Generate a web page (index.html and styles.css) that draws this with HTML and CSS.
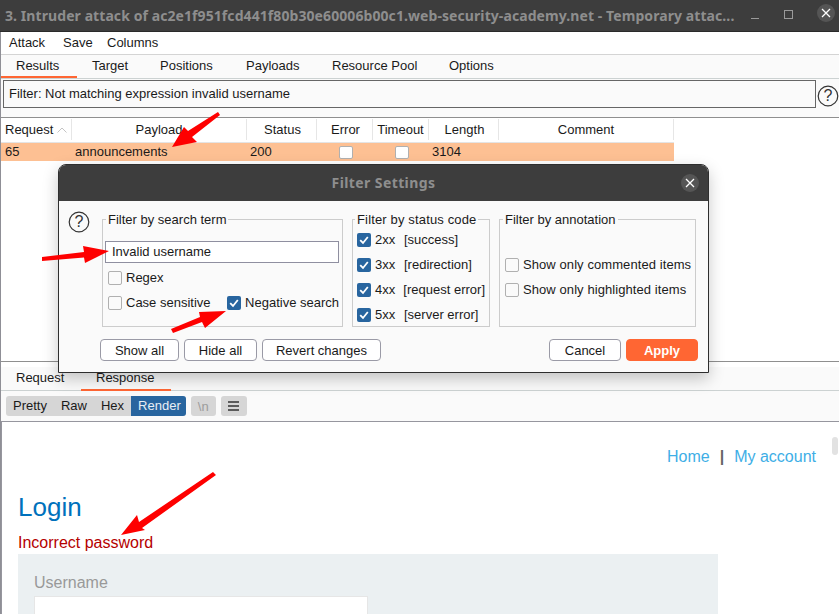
FILE: index.html
```html
<!DOCTYPE html>
<html lang="en">
<head>
    <meta charset="UTF-8">
    <meta name="viewport" content="width=device-width, initial-scale=1.0">
    <title>Intruder attack</title>
    <link rel="stylesheet" href="styles.css">
</head>
<body>

    <div class="window">
        <header class="titlebar">
            <span class="titlebar-text">3. Intruder attack of ac2e1f951fcd441f80b30e60006b00c1.web-security-academy.net - Temporary attac...</span>
            <span class="win-min"></span>
            <span class="win-max"></span>
            <span class="win-close">
                <svg width="10" height="10" viewBox="0 0 10 10"><path d="M1 1L9 9M9 1L1 9" stroke="#fff" stroke-width="1.3"/></svg>
            </span>
        </header>

        <nav class="menubar">
            <span>Attack</span>
            <span>Save</span>
            <span>Columns</span>
        </nav>

        <div class="tabs main-tabs">
            <span class="tab active">Results</span>
            <span class="tab">Target</span>
            <span class="tab">Positions</span>
            <span class="tab">Payloads</span>
            <span class="tab">Resource Pool</span>
            <span class="tab">Options</span>
        </div>

        <div class="filter-row">
            <div class="filter-box">Filter: Not matching expression invalid username</div>
            <svg class="help" width="22" height="22" viewBox="0 0 22 22"><circle cx="11" cy="11" r="9.8" fill="none" stroke="#333" stroke-width="1.2"/><text x="11" y="16" text-anchor="middle" class="help-mark">?</text></svg>
        </div>

        <div class="results">
            <div class="table-row table-head">
                <div class="cell col-request head-left">Request
                    <svg width="10" height="6" viewBox="0 0 10 6"><path d="M0.5 5.5L5 1L9.5 5.5" fill="none" stroke="#c4c4c4"/></svg>
                </div>
                <div class="cell col-payload">Payload</div>
                <div class="cell col-status">Status</div>
                <div class="cell col-error">Error</div>
                <div class="cell col-timeout">Timeout</div>
                <div class="cell col-length">Length</div>
                <div class="cell col-comment">Comment</div>
            </div>
            <div class="table-row table-hit">
                <div class="cell col-request">65</div>
                <div class="cell col-payload">announcements</div>
                <div class="cell col-status">200</div>
                <div class="cell col-error"><span class="check"></span></div>
                <div class="cell col-timeout"><span class="check"></span></div>
                <div class="cell col-length">3104</div>
                <div class="cell col-comment"></div>
            </div>
        </div>

        <div class="lower">
            <div class="tabs lower-tabs">
                <span class="tab">Request</span>
                <span class="tab active">Response</span>
            </div>
            <div class="toolbar">
                <div class="view-group">
                    <span class="view-btn">Pretty</span>
                    <span class="view-btn">Raw</span>
                    <span class="view-btn">Hex</span>
                    <span class="view-btn current">Render</span>
                </div>
                <span class="tool-btn muted">\n</span>
                <span class="tool-btn">
                    <svg width="11" height="10" viewBox="0 0 11 10"><path d="M0 1H11M0 5H11M0 9H11" stroke="#333" stroke-width="1.3"/></svg>
                </span>
            </div>
            <div class="render">
                <div class="site-nav">
                    <a>Home</a>
                    <span class="site-sep">|</span>
                    <a>My account</a>
                </div>
                <h1 class="login-title">Login</h1>
                <p class="login-error">Incorrect password</p>
                <div class="login-panel">
                    <label class="login-label">Username</label>
                    <div class="login-input"></div>
                </div>
                <div class="scroll-thumb"></div>
            </div>
        </div>
    </div>

    <section class="dialog">
        <header class="dialog-title">
            <span>Filter Settings</span>
            <span class="dialog-close">
                <svg width="10" height="10" viewBox="0 0 10 10"><path d="M1 1L9 9M9 1L1 9" stroke="#fff" stroke-width="1.3"/></svg>
            </span>
        </header>
        <div class="dialog-body">
            <svg class="dialog-help" width="22" height="22" viewBox="0 0 22 22"><circle cx="11" cy="11" r="9.8" fill="none" stroke="#333" stroke-width="1.2"/><text x="11" y="16" text-anchor="middle" class="help-mark">?</text></svg>

            <fieldset class="group group-term">
                <legend>Filter by search term</legend>
                <div class="term-input">Invalid username</div>
                <div class="opt opt-regex"><span class="check"></span>Regex</div>
                <div class="opt-line">
                    <div class="opt"><span class="check"></span>Case sensitive</div>
                    <div class="opt"><span class="check on"><svg width="14" height="14" viewBox="0 0 14 14"><path d="M3.2 7.2L6 10L10.8 4" fill="none" stroke="#fff" stroke-width="1.8"/></svg></span>Negative search</div>
                </div>
            </fieldset>

            <fieldset class="group group-status">
                <legend>Filter by status code</legend>
                <div class="opt"><span class="check on"><svg width="14" height="14" viewBox="0 0 14 14"><path d="M3.2 7.2L6 10L10.8 4" fill="none" stroke="#fff" stroke-width="1.8"/></svg></span><span class="code">2xx</span>[success]</div>
                <div class="opt"><span class="check on"><svg width="14" height="14" viewBox="0 0 14 14"><path d="M3.2 7.2L6 10L10.8 4" fill="none" stroke="#fff" stroke-width="1.8"/></svg></span><span class="code">3xx</span>[redirection]</div>
                <div class="opt"><span class="check on"><svg width="14" height="14" viewBox="0 0 14 14"><path d="M3.2 7.2L6 10L10.8 4" fill="none" stroke="#fff" stroke-width="1.8"/></svg></span><span class="code">4xx</span>[request error]</div>
                <div class="opt"><span class="check on"><svg width="14" height="14" viewBox="0 0 14 14"><path d="M3.2 7.2L6 10L10.8 4" fill="none" stroke="#fff" stroke-width="1.8"/></svg></span><span class="code">5xx</span>[server error]</div>
            </fieldset>

            <fieldset class="group group-note">
                <legend>Filter by annotation</legend>
                <div class="opt"><span class="check"></span>Show only commented items</div>
                <div class="opt"><span class="check"></span>Show only highlighted items</div>
            </fieldset>
        </div>
        <footer class="dialog-actions">
            <button class="btn btn-show">Show all</button>
            <button class="btn btn-hide">Hide all</button>
            <button class="btn btn-revert">Revert changes</button>
            <button class="btn btn-cancel">Cancel</button>
            <button class="btn btn-apply">Apply</button>
        </footer>
    </section>

    <!-- red annotation arrows drawn over the screenshot -->
    <svg class="arrows" width="839" height="614" viewBox="0 0 839 614">
        <path d="M220 115L218 112L188 131L184 127L172 147L197 142L192 137Z"/>
        <path d="M42 257L42 261L84 257.5L85 263L109 251L83 246L84 252Z"/>
        <path d="M171 329L173 333L202 322L205 328L226 311L199 312L200 317Z"/>
        <path d="M213 472L216 475L142 528L145 530L121 535L137 515L139 522Z"/>
    </svg>

</body>
</html>
```

FILE: styles.css
```css
/* Page */
html, body {
    margin: 0;
    height: 100%;
    overflow: hidden;
}

body {
    position: relative;
    width: 839px;
    height: 614px;
    font-family: "Liberation Sans", Arial, sans-serif;
    font-size: 13px;
    color: #1a1a1a;
    background: #fff;
}

.window {
    display: flex;
    flex-direction: column;
    height: 614px;
}

/* thin grey window edge */
.window::after {
    content: "";
    position: absolute;
    left: 0;
    top: 32px;
    bottom: 0;
    width: 1px;
    background: #8f8f96;
}

/* Title bar */
.titlebar {
    flex: none;
    display: flex;
    align-items: center;
    height: 31px;
    padding-left: 5px;
    background: #3d3d3d;
    border-bottom: 1px solid #2a2a2a;
}

.titlebar-text {
    width: 733px;
    white-space: nowrap;
    overflow: hidden;
    font-family: "Noto Sans", sans-serif;
    font-weight: 700;
    font-size: 14px;
    letter-spacing: 0.08px;
    color: #8e8e8e;
}

.win-min {
    width: 8px;
    height: 1px;
    margin: 5px 0 0 13px;
    background: #9a9a9a;
}

.win-max {
    width: 7px;
    height: 7px;
    margin: 0 0 2px 25px;
    border: 1px solid #9a9a9a;
}

.win-close {
    display: flex;
    align-items: center;
    justify-content: center;
    width: 18px;
    height: 18px;
    margin: 0 0 5px 24px;
    border-radius: 50%;
    background: #555;
}

/* Menu and tabs */
.menubar {
    flex: none;
    display: flex;
    height: 23px;
    padding-left: 9px;
    line-height: 21px;
    border-bottom: 1px solid #d4d4d4;
    box-sizing: border-box;
}

.menubar span:nth-child(1) { width: 54px; }
.menubar span:nth-child(2) { width: 44px; }

.tabs {
    flex: none;
    display: flex;
    background: #fafafa;
    border-bottom: 1px solid #ccd2d2;
}

.tab {
    box-sizing: border-box;
    padding-left: 15px;
    border-bottom: 2px solid transparent;
    margin-bottom: -1px;
}

.tab.active {
    border-bottom-color: #ff6633;
}

.main-tabs {
    height: 23px;
    padding-left: 1px;
    line-height: 21px;
}

.main-tabs .tab { height: 23px; }
.main-tabs .tab:nth-child(1) { width: 76px; }
.main-tabs .tab:nth-child(2) { width: 68px; }
.main-tabs .tab:nth-child(3) { width: 86px; }
.main-tabs .tab:nth-child(4) { width: 86px; }
.main-tabs .tab:nth-child(5) { width: 117px; }

/* Filter row */
.filter-row {
    flex: none;
    display: flex;
    align-items: center;
    height: 38px;
    padding-left: 3px;
    background: #fafafa;
}

.filter-box {
    flex: none;
    width: 806px;
    height: 26px;
    margin-top: -9px;
    padding-left: 5px;
    line-height: 26px;
    background: #fafafa;
    border: 1px solid #666;
}

.help {
    flex: none;
    margin: -5px 0 0 1px;
}

.help-mark {
    font-family: "Liberation Sans", sans-serif;
    font-size: 16px;
    fill: #333;
}

/* Results table */
.results {
    flex: 1;
    border-top: 1px solid #8f8f8f;
    margin-left: 1px;
}

.table-row {
    display: flex;
    width: 673px;
}

.table-head {
    height: 25px;
    border-bottom: 1px solid #e4e4e4;
    box-sizing: border-box;
}

.table-head .cell {
    justify-content: center;
    height: 21px;
    margin: 1px 0 2px;
    padding-left: 0;
    line-height: 21px;
    border-right: 1px solid #e6e6e6;
}

.table-head .head-left {
    justify-content: flex-start;
    gap: 4px;
    padding-left: 4px;
}

.table-head .col-status,
.table-head .col-error,
.table-head .col-length {
    padding-left: 2px;
}

.table-hit {
    height: 18px;
    line-height: 18px;
    background: #fdc093;
}

.cell {
    display: flex;
    align-items: center;
    box-sizing: border-box;
    padding-left: 3px;
    white-space: nowrap;
}

.col-request { width: 71px; }
.col-payload { width: 175px; }
.col-status { width: 70px; }
.col-error { width: 56px; }
.col-timeout { width: 56px; }
.col-length { width: 70px; }
.col-comment { width: 175px; }

.table-hit .col-request { padding-left: 4px; }

.table-hit .col-error .check,
.table-hit .col-timeout .check {
    width: 14px;
    height: 13px;
    margin: 1px 0 0 19px;
    background: #fff;
}

/* Lower panel */
.lower {
    flex: none;
    display: flex;
    flex-direction: column;
    height: 253px;
    border-top: 1px solid #8f8f8f;
    box-sizing: border-box;
}

.lower-tabs {
    height: 24px;
    margin-top: 5px;
    line-height: 22px;
    box-sizing: border-box;
    padding-left: 1px;
}

.lower-tabs .tab { height: 24px; }
.lower-tabs .tab:nth-child(1) { width: 80px; }
.lower-tabs .tab:nth-child(2) { width: 90px; }

.toolbar {
    flex: none;
    display: flex;
    align-items: center;
    gap: 5px;
    height: 31px;
    padding-left: 6px;
    background: #fafafa;
    border-bottom: 1px solid #96969e;
    box-sizing: border-box;
}

.view-group {
    display: flex;
    height: 20px;
    line-height: 20px;
    background: #d6d6d6;
    border-radius: 3px;
}

.view-btn {
    padding: 0 7px;
}

.view-btn.current {
    padding-right: 5px;
    color: #e8eef5;
    background: #28659f;
    border-radius: 0 3px 3px 0;
}

.tool-btn {
    display: flex;
    align-items: center;
    justify-content: center;
    width: 25px;
    height: 20px;
    background: #d6d6d6;
    border-radius: 3px;
}

.tool-btn:last-child { width: 26px; }

.muted {
    color: #9c9c9c;
}

/* Rendered response */
.render {
    position: relative;
    flex: 1;
    overflow: hidden;
    margin-left: 1px;
    padding-left: 16px;
    background: #fff;
    border-left: 1px solid #96969e;
}

.site-nav {
    display: flex;
    justify-content: flex-end;
    gap: 10px;
    margin: 26px 23px 0 0;
    font-size: 16px;
    line-height: 18px;
    color: #3eaee6;
}

.site-sep {
    font-weight: 700;
    color: #666;
}

.login-title {
    margin: 26px 0 0;
    font-size: 26px;
    font-weight: 400;
    line-height: 30px;
    color: #0071bc;
}

.login-error {
    margin: 12px 0 0;
    font-size: 16px;
    line-height: 18px;
    color: #b50000;
}

.login-panel {
    width: 668px;
    height: 80px;
    margin-top: 2px;
    padding: 20px 16px 0;
    background: #ebf0f2;
}

.login-label {
    display: block;
    font-size: 16px;
    line-height: 18px;
    color: #999;
}

.login-input {
    width: 334px;
    height: 30px;
    margin-top: 4px;
    background: #fff;
    border: 1px solid #e6e6e6;
    box-sizing: border-box;
}

.scroll-thumb {
    position: absolute;
    top: 15px;
    right: 1px;
    width: 6px;
    height: 18px;
    background: #e2e2e2;
    border-radius: 3px;
}

/* Filter dialog */
.dialog {
    position: absolute;
    left: 58px;
    top: 164px;
    width: 651px;
    height: 209px;
    box-sizing: border-box;
    background: #fafafa;
    border: 1px solid #2e2e2e;
    border-radius: 8px 8px 0 0;
    box-shadow: 0 6px 16px rgba(0, 0, 0, 0.22);
}

.dialog-title {
    position: relative;
    height: 36px;
    line-height: 36px;
    text-align: center;
    background: #3d3d3d;
    border-radius: 7px 7px 0 0;
    font-family: "Noto Sans", sans-serif;
    font-weight: 700;
    font-size: 14px;
    letter-spacing: 0.4px;
    color: #8e8e8e;
}

.dialog-close {
    position: absolute;
    right: 9px;
    top: 9px;
    display: flex;
    align-items: center;
    justify-content: center;
    width: 18px;
    height: 18px;
    border-radius: 50%;
    background: #555;
}

.dialog-body {
    display: flex;
    height: 138px;
}

.dialog-help {
    flex: none;
    margin: 10px 0 0 9px;
}

.group {
    flex: none;
    min-width: 0;
    height: 115px;
    margin: 11px 0 0 9px;
    padding: 0 4px;
    box-sizing: border-box;
    border: 1px solid #ccc;
}

.group legend {
    padding: 0 2px;
    line-height: 15px;
}

.group-term {
    width: 241px;
    margin-left: 12px;
    padding: 0 2px;
}

.group-term legend { margin-left: 1px; }

.group-status {
    width: 138px;
}

.group-status legend {
    margin-left: -2px;
    letter-spacing: 0.15px;
}

.group-note {
    width: 197px;
    padding: 0 5px;
}

.group-note legend { margin-left: -2px; }

.group-note .opt {
    letter-spacing: 0.08px;
}

.term-input {
    width: 234px;
    height: 22px;
    margin-top: 14px;
    padding-left: 6px;
    line-height: 20px;
    background: #fff;
    border: 1px solid #8f8fa0;
    box-sizing: border-box;
}

.opt {
    display: flex;
    align-items: center;
    height: 25px;
    white-space: nowrap;
}

.opt-regex {
    margin: 2px 0 0 3px;
}

.opt-line {
    display: flex;
    justify-content: space-between;
    margin: 0 1px 0 3px;
}

.group-note .opt:first-of-type {
    margin-top: 25px;
}

.check {
    flex: none;
    display: inline-block;
    box-sizing: border-box;
    width: 14px;
    height: 14px;
    margin-right: 4px;
    background: #fafafa;
    border: 1px solid #b0b0b0;
    border-radius: 2px;
}

.check.on {
    background: #28659f;
    border: none;
}

.check svg {
    display: block;
}

.code {
    width: 29px;
}

/* Dialog buttons */
.dialog-actions {
    display: flex;
    gap: 5px;
    padding-left: 41px;
}

.btn {
    height: 22px;
    padding: 0;
    font-family: inherit;
    font-size: 13px;
    color: #1a1a1a;
    background: #fff;
    border: 1px solid #9a9aa6;
    border-radius: 4px;
}

.btn-show { width: 79px; }
.btn-hide { width: 73px; }
.btn-revert { width: 119px; }
.btn-cancel { width: 72px; margin-left: 163px; }

.btn-apply {
    width: 72px;
    font-weight: 700;
    color: #fff;
    background: #ff6633;
    border-color: #ff6633;
}

/* Annotation arrows */
.arrows {
    position: absolute;
    left: 0;
    top: 0;
    pointer-events: none;
}

.arrows path {
    fill: #fe0000;
}
```
